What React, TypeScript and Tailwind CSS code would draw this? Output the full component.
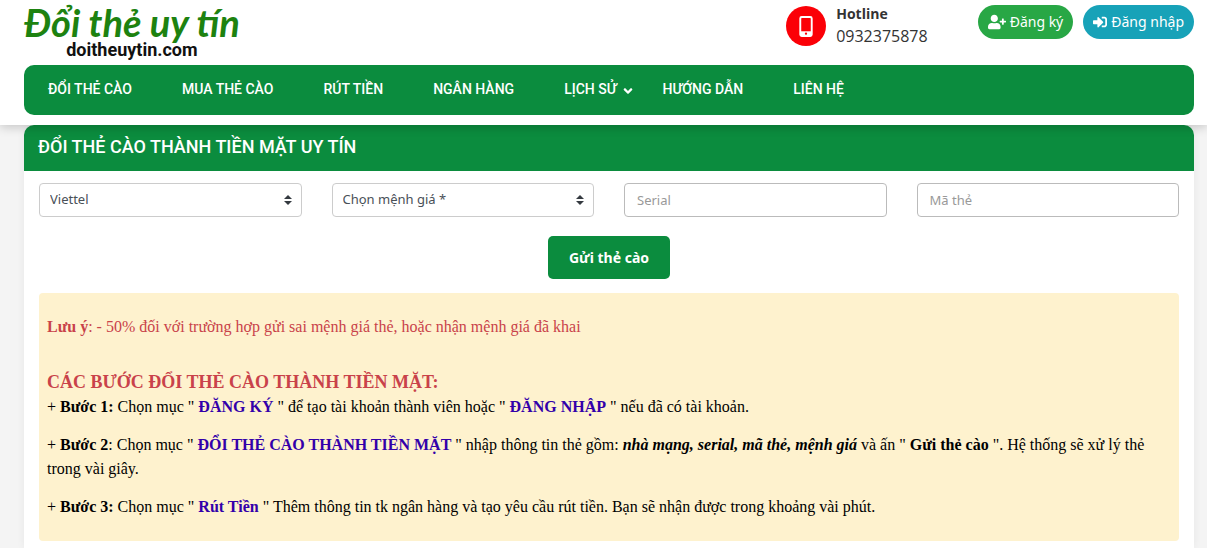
import * as React from "react"
import { FaAngleDown, FaSignInAlt, FaUserPlus } from "react-icons/fa"

const menu = [
	{ label: "ĐỔI THẺ CÀO", href: "#doi-the" },
	{ label: "MUA THẺ CÀO", href: "#mua-the" },
	{ label: "RÚT TIỀN", href: "#rut-tien" },
	{ label: "NGÂN HÀNG", href: "#ngan-hang" },
	{ label: "LỊCH SỬ", href: "#lich-su", dropdown: true },
	{ label: "HƯỚNG DẪN", href: "#huong-dan" },
	{ label: "LIÊN HỆ", href: "#lien-he" },
]

function Logo() {
	return (
		<a href="#" className="flex flex-col items-center whitespace-nowrap">
			<span className="font-['Lato','Open_Sans',sans-serif] text-[38px] leading-[44px] font-bold text-[#1d8210] italic">
				Đổi thẻ uy tín
			</span>
			<span className="-mt-1 font-['Roboto',sans-serif] text-[18px] leading-5 font-bold text-[#111]">
				doitheuytin.com
			</span>
		</a>
	)
}

function Hotline() {
	return (
		<div className="mr-[50px] flex items-center gap-2.5">
			<span className="flex size-10 items-center justify-center rounded-full bg-[#fb0007]">
				<svg viewBox="0 0 14 22" className="h-[21px] w-3.5" aria-hidden="true">
					<rect x="1" y="1" width="12" height="20" rx="1.5" fill="none" stroke="white" strokeWidth="2" />
					<path d="M1 16h12v4H1z" fill="white" />
					<circle cx="7" cy="18.5" r="1.2" fill="#fb0007" />
				</svg>
			</span>
			<div className="font-['Open_Sans',sans-serif] text-[#333]">
				<b className="block text-sm leading-5">Hotline</b>
				<span className="block text-base leading-6">0932375878</span>
			</div>
		</div>
	)
}

function Header() {
	return (
		<header>
			<div className="flex h-[65px] items-start justify-between">
				<Logo />
				<div className="flex items-start pt-1">
					<Hotline />
					<div className="flex gap-2.5 pt-px text-sm text-white">
						<a href="#dang-ky" className="flex h-[34px] items-center gap-1 rounded-full bg-[#28a745] px-2.5">
							<FaUserPlus className="size-[18px]" />
							Đăng ký
						</a>
						<a href="#dang-nhap" className="flex h-[34px] items-center gap-1 rounded-full bg-[#17a2b8] px-2.5">
							<FaSignInAlt className="size-3.5" />
							Đăng nhập
						</a>
					</div>
				</div>
			</div>
			<nav className="h-[50px] rounded-[10px] bg-[#0b8c3e] px-6 pt-3.5">
				<ul className="flex gap-[50px] font-['Roboto',sans-serif] text-sm leading-5 font-medium whitespace-nowrap text-white">
					{menu.map((item) => (
						<li key={item.href} className={item.dropdown ? "-mr-[22px]" : ""}>
							<a href={item.href} className="flex items-center gap-1">
								{item.label}
								{item.dropdown && <FaAngleDown className="mt-1 size-3.5" />}
							</a>
						</li>
					))}
				</ul>
			</nav>
		</header>
	)
}

function Select({ label, children }: { label: string; children: React.ReactNode }) {
	return (
		<div className="relative">
			<select
				aria-label={label}
				className="h-[34px] w-full appearance-none rounded-sm border border-[#ccc] bg-white px-2.5 text-[13px] text-[#495057]"
			>
				{children}
			</select>
			<svg viewBox="0 0 8 10" className="pointer-events-none absolute top-3 right-2.5 h-2.5 w-2" aria-hidden="true">
				<path d="M4 0l4 4H0zM4 10L0 6h8z" fill="#343a40" />
			</svg>
		</div>
	)
}

function CardForm() {
	const input =
		"h-[34px] w-full rounded-sm border border-[#bbb] bg-white px-3 text-[13px] text-[#495057] placeholder:text-[#999]"
	return (
		<form onSubmit={(e) => e.preventDefault()}>
			<div className="grid grid-cols-4 gap-[30px]">
				<Select label="Nhà mạng">
					<option>Viettel</option>
				</Select>
				<Select label="Mệnh giá">
					<option>Chọn mệnh giá *</option>
				</Select>
				<input aria-label="Serial" placeholder="Serial" className={input} />
				<input aria-label="Mã thẻ" placeholder="Mã thẻ" className={input} />
			</div>
			<div className="mt-[19px] flex justify-center">
				<button type="submit" className="h-[43px] rounded-[5px] bg-[#0b8c3e] px-[21px] text-sm font-bold text-white">
					Gửi thẻ cào
				</button>
			</div>
		</form>
	)
}

function StepLink({ href, children }: { href: string; children: React.ReactNode }) {
	return (
		<a href={href} className="font-bold text-[#3300aa]">
			{children}
		</a>
	)
}

function Notice() {
	return (
		<div className="mt-3.5 rounded-sm bg-[#fef2ce] px-2 py-[22px] font-['Liberation_Serif',serif] text-base leading-6 text-black">
			<p className="mb-[31px] text-[#c9424a]">
				<b>Lưu ý</b>: - 50% đối với trường hợp gửi sai mệnh giá thẻ, hoặc nhận mệnh giá đã khai
			</p>
			<h2 className="text-lg leading-[25px] font-bold text-[#c9424a]">CÁC BƯỚC ĐỔI THẺ CÀO THÀNH TIỀN MẶT:</h2>
			<p>
				+ <b>Bước 1:</b> Chọn mục " <StepLink href="#dang-ky">ĐĂNG KÝ</StepLink> " để tạo tài khoản thành viên hoặc "{" "}
				<StepLink href="#dang-nhap">ĐĂNG NHẬP</StepLink> " nếu đã có tài khoản.
			</p>
			<p className="mt-3.5">
				+ <b>Bước 2</b>: Chọn mục " <StepLink href="#doi-the">ĐỔI THẺ CÀO THÀNH TIỀN MẶT</StepLink> " nhập thông tin thẻ
				gồm: <b className="italic">nhà mạng, serial, mã thẻ, mệnh giá</b> và ấn " <b>Gửi thẻ cào</b> ". Hệ thống sẽ xử
				lý thẻ trong vài giây.
			</p>
			<p className="mt-3.5">
				+ <b>Bước 3:</b> Chọn mục " <StepLink href="#rut-tien">Rút Tiền</StepLink> " Thêm thông tin tk ngân hàng và tạo
				yêu cầu rút tiền. Bạn sẽ nhận được trong khoảng vài phút.
			</p>
		</div>
	)
}

export default function App() {
	return (
		<div className="min-h-screen bg-[#f4f4f4] font-['Noto_Sans',sans-serif]">
			<div className="relative z-10 bg-white pr-[13px] pb-2.5 pl-6 shadow-[0_2px_10px_rgba(0,0,0,0.2)]">
				<Header />
			</div>
			<main className="pr-[13px] pl-6">
				<section className="rounded-t-[10px] bg-white shadow-[0_0_8px_rgba(0,0,0,0.06)]">
					<h1 className="rounded-t-[10px] bg-[#0b8c3e] px-3.5 pt-2.5 pb-3 font-['Roboto',sans-serif] text-lg leading-6 font-medium text-white">
						ĐỔI THẺ CÀO THÀNH TIỀN MẶT UY TÍN
					</h1>
					<div className="px-[15px] pt-3 pb-[7px]">
						<CardForm />
						<Notice />
					</div>
				</section>
			</main>
		</div>
	)
}
